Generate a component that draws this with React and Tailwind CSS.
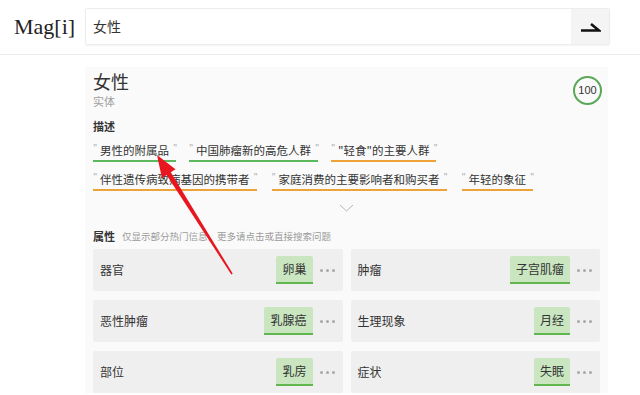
import React from "react";

const Tag = ({ text, color }) => (
  <div className={`flex items-start gap-[4px] border-b-2 pb-[2px] ${color}`}>
    <span className="text-[9px] leading-[12px] text-[#aaa] w-[3px]">"</span>
    <span className="text-[11.5px] leading-[16px] text-[#333]">{text}</span>
    <span className="text-[9px] leading-[12px] text-[#aaa] w-[3px]">"</span>
  </div>
);

const Dots = () => (
  <div className="flex items-center gap-[3px] ml-[7px]">
    <span className="w-[3px] h-[3px] rounded-full bg-[#a8a8a8]" />
    <span className="w-[3px] h-[3px] rounded-full bg-[#a8a8a8]" />
    <span className="w-[3px] h-[3px] rounded-full bg-[#a8a8a8]" />
  </div>
);

const Attr = ({ label, value }) => (
  <div className="bg-[#efefef] h-[42px] flex items-center pl-[7px] pr-[8px] rounded-[2px]">
    <div className="flex-1 text-[12px] text-[#333]">{label}</div>
    <div className="h-[28px] px-[6px] bg-[#c9e6c1] border-b-2 border-[#62b64f] rounded-t-[2px] flex items-center text-[12px] text-[#333]">
      {value}
    </div>
    <Dots />
  </div>
);

export default function App() {
  const green = "border-[#5cb85c]";
  const orange = "border-[#eea23a]";
  return (
    <div className="relative w-[640px] h-[395px] overflow-hidden bg-white font-['Noto_Sans_CJK_SC','Noto_Sans',sans-serif]">
      {/* header */}
      <div className="h-[55px] border-b border-[#ececec] flex items-start pt-[8px]">
        <div className="w-[85px] pl-[14px] text-[22px] leading-[37px] text-[#222] font-['Liberation_Serif',serif]">
          Mag[i]
        </div>
        <div className="w-[525px] h-[37px] flex border border-[#ededed] rounded-[2px] shadow-[0_1px_2px_rgba(0,0,0,0.05)]">
          <div className="flex-1 pl-[7px] text-[14px] leading-[35px] text-[#333]">女性</div>
          <div className="w-[38px] bg-[#f4f4f4] flex items-center justify-center">
            <svg width="22" height="14" viewBox="0 0 22 14">
              <path d="M2 10.5 H20 L12 4" fill="none" stroke="#111" strokeWidth="2.6" strokeLinejoin="miter" />
            </svg>
          </div>
        </div>
      </div>

      {/* card */}
      <div className="mt-[12px] ml-[85px] w-[523px] bg-[#fafafa] px-[8px] pt-[3px]">
        <div className="flex justify-between">
          <div>
            <div className="text-[18px] leading-[22px] text-[#333]">女性</div>
            <div className="mt-[2px] text-[11px] leading-[14px] text-[#a0a0a0]">实体</div>
          </div>
          <div className="w-[29px] h-[29px] mt-[6px] -mr-[2px] rounded-full border-2 border-[#58a858] flex items-center justify-center text-[11px] text-[#333] font-['Liberation_Sans',sans-serif]">
            100
          </div>
        </div>

        <div className="mt-[11px] text-[11px] leading-[14px] font-bold text-[#333]">描述</div>

        <div className="mt-[9px] flex gap-[13px]">
          <Tag text="男性的附属品" color={green} />
          <Tag text="中国肺瘤新的高危人群" color={green} />
          <Tag text={'"轻食"的主要人群'} color={orange} />
        </div>
        <div className="mt-[9px] flex gap-[15px]">
          <Tag text="伴性遗传病致病基因的携带者" color={orange} />
          <Tag text="家庭消费的主要影响者和购买者" color={orange} />
          <Tag text="年轻的象征" color={orange} />
        </div>

        <div className="mt-[13px] h-[8px] flex justify-center">
          <svg width="15" height="8" viewBox="0 0 15 8">
            <path d="M1 1 L7.5 7 L14 1" fill="none" stroke="#b5b5b5" strokeWidth="1" />
          </svg>
        </div>

        <div className="mt-[17px] flex items-center gap-[7px] leading-[14px]">
          <span className="text-[11px] font-bold text-[#333]">属性</span>
          <span className="text-[9.5px] text-[#9a9a9a]">仅显示部分热门信息，更多请点击或直接搜索问题</span>
        </div>

        <div className="mt-[6px] grid grid-cols-2 gap-x-[8px] gap-y-[9px]">
          <Attr label="器官" value="卵巢" />
          <Attr label="肿瘤" value="子宫肌瘤" />
          <Attr label="恶性肿瘤" value="乳腺癌" />
          <Attr label="生理现象" value="月经" />
          <Attr label="部位" value="乳房" />
          <Attr label="症状" value="失眠" />
        </div>
      </div>

      {/* red annotation arrow */}
      <svg className="absolute left-0 top-0 pointer-events-none" width="640" height="395" viewBox="0 0 640 395">
        <polygon
          points="157,155 175.5,169.3 170.8,172.3 232.7,273.6 231.3,274.4 166.6,174.9 161.9,177.9"
          fill="#e8161e"
        />
      </svg>
    </div>
  );
}
